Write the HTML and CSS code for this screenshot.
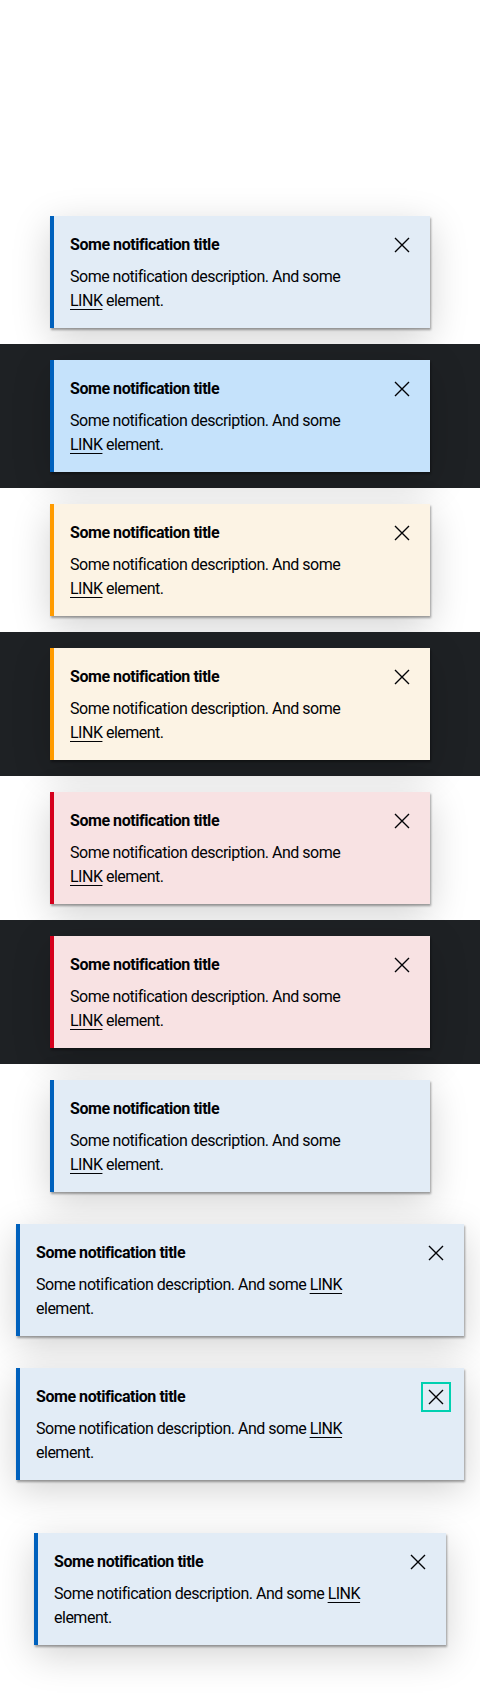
FILE: index.html
```html
<!DOCTYPE html>
<html lang="en">
<head>
<meta charset="utf-8">
<title>Notifications</title>
<link rel="stylesheet" href="styles.css">
</head>
<body>
<div class="page">
  <section class="stage">
    <div class="toast toast--info">
      <div class="toast__content">
        <p class="toast__title">Some notification title</p>
        <p class="toast__desc">Some notification description. And some <a href="#">LINK</a> element.</p>
      </div>
      <button class="toast__close" aria-label="Close"><svg viewBox="0 0 24 24"><path d="M5 5L19 19M19 5L5 19"/></svg></button>
    </div>
  </section>
  <section class="stage stage--dark">
    <div class="toast toast--info-dark">
      <div class="toast__content">
        <p class="toast__title">Some notification title</p>
        <p class="toast__desc">Some notification description. And some <a href="#">LINK</a> element.</p>
      </div>
      <button class="toast__close" aria-label="Close"><svg viewBox="0 0 24 24"><path d="M5 5L19 19M19 5L5 19"/></svg></button>
    </div>
  </section>
  <section class="stage">
    <div class="toast toast--warning">
      <div class="toast__content">
        <p class="toast__title">Some notification title</p>
        <p class="toast__desc">Some notification description. And some <a href="#">LINK</a> element.</p>
      </div>
      <button class="toast__close" aria-label="Close"><svg viewBox="0 0 24 24"><path d="M5 5L19 19M19 5L5 19"/></svg></button>
    </div>
  </section>
  <section class="stage stage--dark">
    <div class="toast toast--warning">
      <div class="toast__content">
        <p class="toast__title">Some notification title</p>
        <p class="toast__desc">Some notification description. And some <a href="#">LINK</a> element.</p>
      </div>
      <button class="toast__close" aria-label="Close"><svg viewBox="0 0 24 24"><path d="M5 5L19 19M19 5L5 19"/></svg></button>
    </div>
  </section>
  <section class="stage">
    <div class="toast toast--error">
      <div class="toast__content">
        <p class="toast__title">Some notification title</p>
        <p class="toast__desc">Some notification description. And some <a href="#">LINK</a> element.</p>
      </div>
      <button class="toast__close" aria-label="Close"><svg viewBox="0 0 24 24"><path d="M5 5L19 19M19 5L5 19"/></svg></button>
    </div>
  </section>
  <section class="stage stage--dark">
    <div class="toast toast--error">
      <div class="toast__content">
        <p class="toast__title">Some notification title</p>
        <p class="toast__desc">Some notification description. And some <a href="#">LINK</a> element.</p>
      </div>
      <button class="toast__close" aria-label="Close"><svg viewBox="0 0 24 24"><path d="M5 5L19 19M19 5L5 19"/></svg></button>
    </div>
  </section>
  <section class="stage">
    <div class="toast toast--info toast--no-close">
      <div class="toast__content">
        <p class="toast__title">Some notification title</p>
        <p class="toast__desc">Some notification description. And some <a href="#">LINK</a> element.</p>
      </div>
    </div>
  </section>
  <section class="stage">
    <div class="toast toast--info toast--fluid">
      <div class="toast__content">
        <p class="toast__title">Some notification title</p>
        <p class="toast__desc">Some notification description. And some <a href="#">LINK</a> element.</p>
      </div>
      <button class="toast__close" aria-label="Close"><svg viewBox="0 0 24 24"><path d="M5 5L19 19M19 5L5 19"/></svg></button>
    </div>
  </section>
  <section class="stage">
    <div class="toast toast--info toast--fluid">
      <div class="toast__content">
        <p class="toast__title">Some notification title</p>
        <p class="toast__desc">Some notification description. And some <a href="#">LINK</a> element.</p>
      </div>
      <button class="toast__close is-focused" aria-label="Close"><svg viewBox="0 0 24 24"><path d="M5 5L19 19M19 5L5 19"/></svg></button>
    </div>
  </section>
  <section class="stage stage--inset">
    <div class="toast toast--info toast--fluid">
      <div class="toast__content">
        <p class="toast__title">Some notification title</p>
        <p class="toast__desc">Some notification description. And some <a href="#">LINK</a> element.</p>
      </div>
      <button class="toast__close" aria-label="Close"><svg viewBox="0 0 24 24"><path d="M5 5L19 19M19 5L5 19"/></svg></button>
    </div>
  </section>
</div>
</body>
</html>
```
FILE: styles.css
```css
* { box-sizing: border-box; }
html, body { margin: 0; padding: 0; background: #fff; }
body {
  font-family: Roboto, "Liberation Sans", sans-serif;
  color: #010205;
  -webkit-font-smoothing: antialiased;
}
.page { padding-top: 200px; }
.stage {
  padding: 16px;
  height: 144px;
}
.stage--dark { background: #1e2124; }
.stage--inset { padding: 37px 34px; height: 200px; }

.toast {
  display: flex;
  align-items: flex-start;
  gap: 16px;
  width: 380px;
  height: 112px;
  margin: 0 auto;
  padding: 17px 16px 16px 16px;
  border-left: 4px solid #0061bd;
  box-shadow: 1px 2px 2px rgba(0,0,0,0.35), 0 10px 36px rgba(0,0,0,0.18);
}
.toast--fluid { width: auto; }
.toast--no-close { padding-right: 56px; }
.toast--info { background: #e2ecf6; border-left-color: #0061bd; }
.toast--info-dark { background: #c5e2fb; border-left-color: #0061bd; }
.toast--warning { background: #fcf3e4; border-left-color: #ff9b00; }
.toast--error { background: #f8e2e3; border-left-color: #d5001c; }

.toast__content { flex: 1; min-width: 0; max-width: 340px; }
.toast__title {
  margin: 0;
  font-size: 16px;
  line-height: 24px;
  font-weight: 700;
  letter-spacing: -0.45px;
}
.toast__desc {
  margin: 8px 0 0;
  font-size: 16px;
  line-height: 24px;
  letter-spacing: -0.5px;
}
.toast__desc a { color: inherit; text-decoration: underline; text-underline-offset: 3px; text-decoration-thickness: 1px; }

.toast__close {
  flex: none;
  width: 24px;
  height: 24px;
  margin-left: auto;
  padding: 0;
  border: 0;
  background: transparent;
  cursor: pointer;
  display: flex;
}
.toast__close svg {
  width: 24px;
  height: 24px;
  fill: none;
  stroke: #010205;
  stroke-width: 1.4;
}
.toast__close.is-focused {
  outline: 2px solid #00d0b0;
  outline-offset: 1px;
}
```
